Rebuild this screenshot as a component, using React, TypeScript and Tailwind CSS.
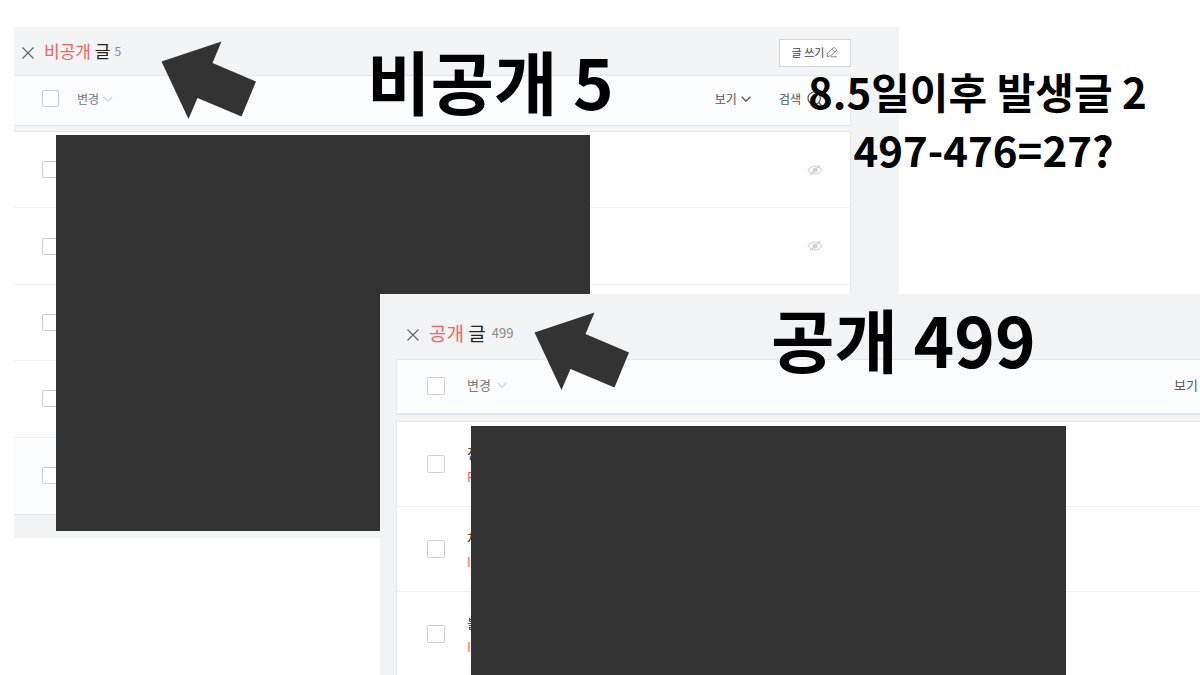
import type { ReactNode } from "react";

interface PanelTitleProps {
  status: string;
  count: number;
  large?: boolean;
}

interface Post {
  title: string;
  category: string;
}

const privateRows = [1, 2, 3, 4, 5];

const publicPosts: Post[] = [
  { title: "전", category: "P" },
  { title: "차", category: "IT" },
  { title: "블", category: "IT" },
];

function CloseIcon() {
  return (
    <svg viewBox="0 0 12 12" className="size-3" fill="none" stroke="currentColor" strokeWidth="1.2">
      <path d="M0.5 0.5 11.5 11.5M11.5 0.5 0.5 11.5" />
    </svg>
  );
}

function ChevronIcon() {
  return (
    <svg viewBox="0 0 10 6" className="h-1.5 w-2.5" fill="none" stroke="currentColor" strokeWidth="1.3">
      <path d="M0.7 0.7 5 5.2 9.3 0.7" />
    </svg>
  );
}

function SearchIcon() {
  return (
    <svg viewBox="0 0 16 16" className="size-4" fill="none" stroke="currentColor" strokeWidth="1.2">
      <circle cx="7.2" cy="7.2" r="6.2" />
      <path d="m11.5 11.5 3.5 3.5" />
    </svg>
  );
}

function PencilIcon() {
  return (
    <svg viewBox="0 0 12 12" className="size-3 text-[#888888]" fill="none" stroke="currentColor" strokeWidth="1">
      <path d="M1 10.5 1.7 7 7 2Q7.8 1.2 8.6 1.9L10.3 3.4Q11 4.1 10.2 4.9L4.4 9.9 1 10.5ZM5.8 3.2 8.9 6M5 10.8H11" />
    </svg>
  );
}

function HiddenIcon() {
  return (
    <svg viewBox="0 0 16 12" className="h-3 w-4 text-[#d3d3d3]" fill="none" stroke="currentColor" strokeWidth="1.1">
      <path d="M1 6Q4 2 8 2T15 6Q12 10 8 10T1 6Z" />
      <circle cx="8" cy="6" r="2" fill="currentColor" />
      <path d="M3 11 13 1" />
    </svg>
  );
}

function Arrow() {
  return (
    <svg viewBox="0 0 95 78" className="h-[78px] w-[95px]" fill="#333333">
      <polygon points="0.5,20.5 60.5,0.5 51.5,22 95,40.5 80.5,75.5 36.5,57 27.5,78" />
    </svg>
  );
}

function PanelTitle({ status, count, large }: PanelTitleProps) {
  return (
    <div className="flex items-center gap-2.5">
      <button type="button" aria-label="닫기" className="text-[#666666]">
        <CloseIcon />
      </button>
      <h2
        className={
          large
            ? "flex items-center gap-1.5 pb-1 text-[19px] leading-6 text-[#222222]"
            : "flex items-center gap-1 pb-1 text-[17px] leading-6 text-[#222222]"
        }
      >
        <span>
          <span className="text-[#f2655c]">{status}</span> 글
        </span>
        <span className={large ? "text-[13px] leading-5 text-[#888888]" : "text-xs leading-5 text-[#888888]"}>
          {count}
        </span>
      </h2>
    </div>
  );
}

function Checkbox({ label, large }: { label: string; large?: boolean }) {
  return (
    <input
      type="checkbox"
      aria-label={label}
      className={
        large
          ? "size-[18px] shrink-0 appearance-none rounded-xs border border-[#cdced6] bg-white"
          : "size-[17px] shrink-0 appearance-none rounded-xs border border-[#c9cbd3] bg-white"
      }
    />
  );
}

function Caption({ children }: { children: ReactNode }) {
  return <p className="font-bold whitespace-nowrap text-black">{children}</p>;
}

function PrivatePanel() {
  return (
    <section className="flex h-full flex-col bg-[#f2f4f5]">
      <header className="flex h-12 items-center justify-between pt-1 pr-12 pl-2">
        <PanelTitle status="비공개" count={5} />
        <button
          type="button"
          className="flex h-7 w-[72px] items-center justify-center gap-0.5 border border-[#d3d5da] bg-white pb-0.5 text-[11px] text-[#444444]"
        >
          글 쓰기
          <PencilIcon />
        </button>
      </header>
      <div className="mr-12 flex h-[51px] items-center border border-l-0 border-[#e4e6f0] bg-[#fafcfe] pr-[27px] pb-1 pl-7 text-xs text-[#555555]">
        <Checkbox label="전체 선택" />
        <button type="button" className="ml-[18px] flex items-center gap-1 text-[#777777]">
          변경
          <span className="text-[#d5d7da]">
            <ChevronIcon />
          </span>
        </button>
        <button type="button" className="ml-auto flex items-center gap-1">
          보기
          <ChevronIcon />
        </button>
        <button type="button" className="ml-7 flex items-center gap-1.5">
          검색
          <SearchIcon />
        </button>
      </div>
      <ul className="mt-[5px] mr-12 grid h-96 grid-rows-5 border border-l-0 border-[#e4e6f0] bg-white">
        {privateRows.map((row) => (
          <li
            key={row}
            className="flex items-center justify-between border-b border-[#f0f1f4] pr-[27px] pl-7 last:border-b-0 last:bg-[#fafcfe]"
          >
            <Checkbox label={`비공개 글 ${row}`} />
            <HiddenIcon />
          </li>
        ))}
      </ul>
    </section>
  );
}

function PublicPanel() {
  return (
    <section className="h-full overflow-hidden bg-[#f2f3f5] pl-4">
      <header className="flex h-[65px] items-center pt-4 pl-[11px]">
        <PanelTitle status="공개" count={499} large />
      </header>
      <div className="flex h-14 items-center border border-r-0 border-b-2 border-[#e4e6f0] bg-[#fafcfe] pb-0.5 pl-[30px] text-[13px] text-[#555555]">
        <Checkbox label="전체 선택" large />
        <button type="button" className="ml-[22px] flex items-center gap-1.5 pb-0.5 text-[#777777]">
          변경
          <span className="text-[#d5d7da]">
            <ChevronIcon />
          </span>
        </button>
        <button type="button" className="mr-0.5 ml-auto pb-0.5">
          보기
        </button>
      </div>
      <ul className="mt-1.5 border border-r-0 border-[#e4e6f0] bg-white">
        {publicPosts.map((post, i) => (
          <li key={i} className="flex h-[85px] items-center gap-[22px] border-b border-[#eff1f3] pl-[30px] text-[13px]">
            <Checkbox label={post.title} large />
            <div className="pt-0.5 leading-6">
              <p className="text-[#333333]">{post.title}</p>
              <p className="text-[#f2655c]">{post.category}</p>
            </div>
          </li>
        ))}
      </ul>
    </section>
  );
}

export default function App() {
  return (
    <main className="relative h-screen overflow-hidden bg-white font-['Noto_Sans_CJK_KR',sans-serif]">
      <div className="absolute top-[27px] left-3.5 h-[511px] w-[885px]">
        <PrivatePanel />
      </div>
      <div className="absolute top-[135px] left-14 h-[396px] w-[534px] bg-[#333333]" />
      <div className="absolute top-[41px] left-[161px]">
        <Arrow />
      </div>
      <div className="absolute top-7 left-[367px] text-[69px] leading-[104px]">
        <Caption>비공개 5</Caption>
      </div>

      <div className="absolute top-[294px] right-0 bottom-0 left-[380px]">
        <PublicPanel />
      </div>
      <div className="absolute top-[426px] bottom-0 left-[471px] w-[595px] bg-[#333333]" />
      <div className="absolute top-[312px] left-[534px]">
        <Arrow />
      </div>
      <div className="absolute top-[286px] left-[771px] text-[69px] leading-[104px]">
        <Caption>공개 499</Caption>
      </div>

      <div className="absolute top-[62px] left-[808px] text-center text-[42px] leading-[58px]">
        <Caption>8.5일이후 발생글 2</Caption>
        <div className="pl-3">
          <Caption>497-476=27?</Caption>
        </div>
      </div>
    </main>
  );
}
